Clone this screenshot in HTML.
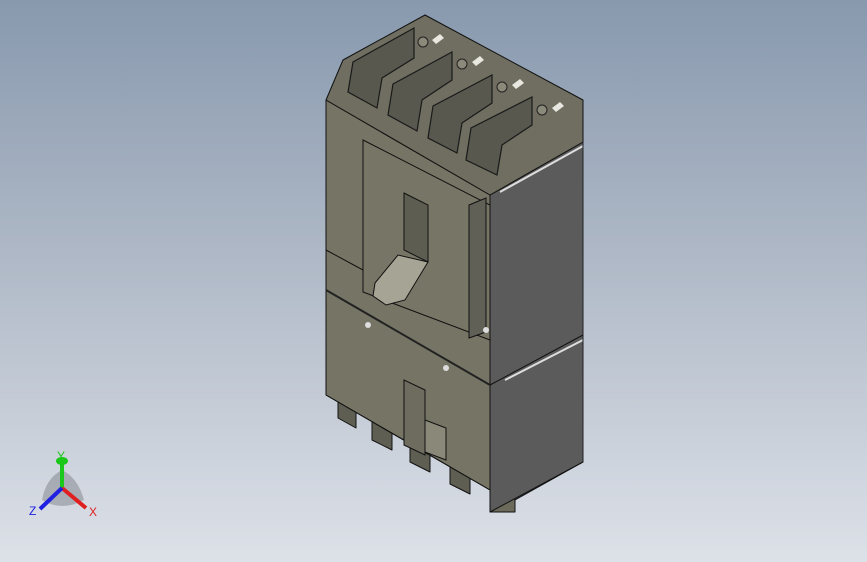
<!DOCTYPE html>
<html><head><style>
html,body{margin:0;padding:0;}
body{width:867px;height:562px;overflow:hidden;background:linear-gradient(#8899ae 0%,#aeb8c6 45%,#dde1e8 100%);}
svg{position:absolute;left:0;top:0}
text{font-family:"Liberation Sans",sans-serif;font-size:12px}
</style></head><body>
<svg width="867" height="562" viewBox="0 0 867 562">
<g stroke="#111" stroke-width="1" stroke-linejoin="round">
<polygon points="338,390 356,400 356,428 338,418" fill="#5f5e52"/>
<polygon points="372,410 392,421 392,450 372,440" fill="#5f5e52"/>
<polygon points="410,430 430,441 430,472 410,462" fill="#5f5e52"/>
<polygon points="450,452 470,463 470,494 450,484" fill="#5f5e52"/>
<polygon points="490,470 515,480 515,512 490,512" fill="#6b6a5b"/>
<polygon points="515,480 583,442 583,462 515,500" fill="#555"/>
<polygon points="490,195 583,142 583,462 490,512" fill="#5b5b5b"/>
<polygon points="326,100 490,195 490,490 326,395" fill="#767565"/>
<polygon points="326,100 343,60 425,15 583,100 583,142 490,195" fill="#6f6e60"/>
</g>
<g stroke="#1a1a1a" stroke-width="1.2" fill="#58584f">
<polygon points="348,92 353,62 414,28 414,58 382,78 377,108"/>
<polygon points="388,115 393,84 452,52 452,80 422,100 417,131"/>
<polygon points="428,138 433,106 492,75 492,103 462,123 457,153"/>
<polygon points="466,160 471,128 532,97 532,125 502,145 497,175"/>
</g>
<g fill="#8a897a" stroke="#222">
<circle cx="423" cy="42" r="5"/><circle cx="462" cy="64" r="5"/><circle cx="502" cy="87" r="5"/><circle cx="542" cy="110" r="5"/>
</g>
<g fill="#e8e8e0">
<polygon points="432,40 440,34 444,38 436,44"/><polygon points="472,62 480,56 484,60 476,66"/>
<polygon points="512,85 520,79 524,83 516,89"/><polygon points="552,108 560,102 564,106 556,112"/>
</g>
<line x1="500" y1="192" x2="583" y2="146" stroke="#ddd" stroke-width="2"/>
<g stroke="#111" stroke-width="1">
<polygon points="363,140 490,205 490,340 363,292" fill="#777666"/>
<polygon points="469,205 486,198 486,332 469,338" fill="#606057"/>
<polygon points="404,193 428,205 428,262 404,250" fill="#5e5d52"/>
<polygon points="375,283 398,255 428,262 405,300 386,305 373,296" fill="#a6a494"/>
<line x1="326" y1="290" x2="490" y2="385" stroke="#222" stroke-width="2"/>
<line x1="326" y1="250" x2="363" y2="270"/>
<line x1="490" y1="385" x2="583" y2="335"/>
<line x1="505" y1="380" x2="583" y2="340" stroke="#ddd" stroke-width="2"/>
<line x1="326" y1="395" x2="490" y2="490"/>
<polygon points="404,380 425,390 425,455 404,445" fill="#6d6c5e"/>
<polygon points="425,420 446,428 446,460 425,452" fill="#8a8979"/>
</g>
<circle cx="368" cy="325" r="3" fill="#ddd"/><circle cx="446" cy="368" r="3" fill="#ddd"/>
<circle cx="486" cy="330" r="3" fill="#ddd"/>
<line x1="583" y1="142" x2="583" y2="462" stroke="#222"/>
<path d="M62 470 Q78 478 84 500 Q62 512 42 500 Q46 478 62 470Z" fill="#7d818a" opacity="0.5"/>
<line x1="62" y1="488" x2="62" y2="462" stroke="#1ac81a" stroke-width="4"/>
<ellipse cx="62" cy="461" rx="6" ry="4" fill="#1ac81a"/>
<line x1="62" y1="488" x2="86" y2="508" stroke="#e02020" stroke-width="4"/>
<line x1="62" y1="488" x2="40" y2="509" stroke="#2020e0" stroke-width="4"/>
<text x="57" y="460" fill="#1ac81a">Y</text>
<text x="89" y="516" fill="#e02020">X</text>
<text x="29" y="515" fill="#2020e0">Z</text>
</svg>
</body></html>
